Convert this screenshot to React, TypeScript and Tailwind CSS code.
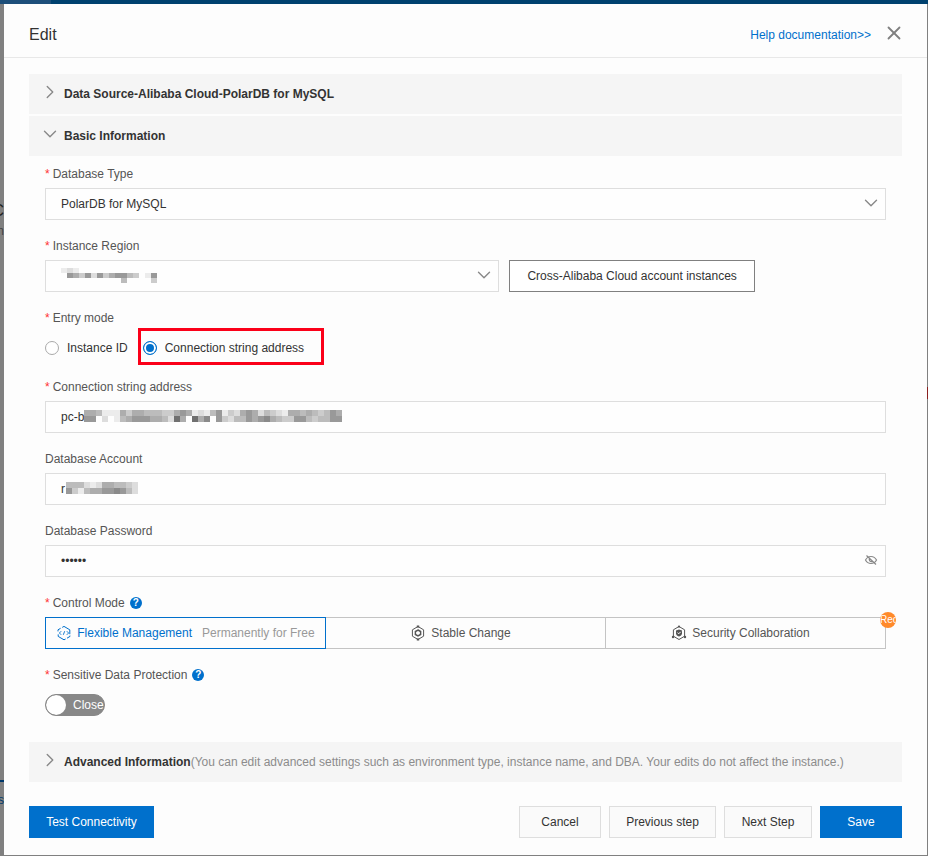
import { useState } from 'react';
import type { ReactNode } from 'react';
import { ChevronDown, ChevronRight, X } from 'lucide-react';

// each digit is one masked cell, 0 = empty, 8 = darkest
const regionMask = ['1210000000000000', '0653626356643016', '0000000000400003'];
const addressMask = [
  '5541115355444335651214613256524321554543465',
  '6602014566655428508570632446567543366434466',
];
const accountMask = ['444212554432', '631455667642'];

const shades = [
  'fill-transparent',
  'fill-[#ececec]',
  'fill-[#dddddd]',
  'fill-[#cccccc]',
  'fill-[#bcbcbc]',
  'fill-[#adadad]',
  'fill-[#999999]',
  'fill-[#8a8a8a]',
  'fill-[#707070]',
];

function Mask({ rows, className }: { rows: string[]; className: string }) {
  return (
    <svg
      aria-hidden="true"
      viewBox={`0 0 ${rows[0].length} ${rows.length}`}
      preserveAspectRatio="none"
      shapeRendering="crispEdges"
      className={`pointer-events-none absolute ${className}`}
    >
      {rows.map((row, y) =>
        row
          .split('')
          .map((shade, x) => (
            <rect key={`${x}-${y}`} x={x} y={y} width="1" height="1" className={shades[+shade]} />
          ))
      )}
    </svg>
  );
}

const hexagon = 'M8 1.5 13.6 4.8v6.4L8 14.5l-5.6-3.3V4.8z';

function FlexibleIcon() {
  return (
    <svg viewBox="0 0 16 16" fill="none" stroke="currentColor" className="size-4">
      <path d="M2 6.4V4.8l2.6-1.5M6.2 2.4 8 1.4l5.8 3.4v4.4M14 10.6v.8l-3 1.8M9.6 14 8 14.8l-5.8-3.4v-2" />
      <path d="M5.2 6.2 3.4 8l1.8 1.8M10.8 6.2 12.6 8l-1.8 1.8M8.7 6.2 7.3 9.8" strokeWidth="0.9" />
    </svg>
  );
}

function StableIcon() {
  return (
    <svg viewBox="0 0 16 16" fill="none" stroke="currentColor" className="size-4">
      <path d={hexagon} />
      <path d="m8 5 2.6 1.5v3L8 11 5.4 9.5v-3z" strokeWidth="1.5" />
      <path d="M6.8 1.5h2.4M6.8 14.5h2.4" strokeWidth="1.8" />
    </svg>
  );
}

function SecurityIcon() {
  return (
    <svg viewBox="0 0 16 16" fill="none" stroke="currentColor" className="size-4">
      <path d={hexagon} />
      <path
        d="m8 4.5 3 1v2.7c0 1.5-1 2.6-3 3.4-2-.8-3-1.9-3-3.4V5.5z"
        fill="currentColor"
        stroke="none"
      />
      <path d="m6.5 7.6 1.2 1.2 2-2" stroke="white" />
      <g fill="currentColor" stroke="none">
        <circle cx="8" cy="1.6" r="1.1" />
        <circle cx="2" cy="12" r="1.2" />
        <circle cx="14" cy="12" r="1.2" />
      </g>
    </svg>
  );
}

function EyeOffIcon() {
  return (
    <svg viewBox="0 0 14 14" fill="none" stroke="currentColor" strokeWidth="1.2" className="size-3.5">
      <path d="M1.5 7C2.8 4.6 4.6 3.5 7 3.5S11.2 4.6 12.5 7C11.2 9.4 9.4 10.5 7 10.5S2.8 9.4 1.5 7z" />
      <path d="M5.6 5.2a2.2 2.2 0 0 0 2.7 3.2M2.5 2.5l9.5 9" />
    </svg>
  );
}

const modes = [
  { name: 'Flexible Management', note: 'Permanently for Free', Icon: FlexibleIcon },
  { name: 'Stable Change', note: '', Icon: StableIcon },
  { name: 'Security Collaboration', note: '', Icon: SecurityIcon },
];

const fieldBox =
  'h-8 w-full appearance-none border border-[#dedede] bg-[#fefefe] px-[15px] outline-none';
const labelRow = 'flex h-7 items-center text-[#555555]';
const radio =
  'size-3.5 appearance-none rounded-full border border-[#aaaaaa] bg-white checked:border-[#0070cc] checked:bg-[#0070cc] checked:shadow-[inset_0_0_0_2px_white]';
const plainButton = 'h-8 border border-[#dedede] bg-[#fafafa]';
const primaryButton = 'h-8 bg-[#0070cc] text-white';

function Star() {
  return <span className="mr-[3px] text-[#ff3333]">*</span>;
}

function Help({ about }: { about: string }) {
  return (
    <button
      type="button"
      aria-label={`Help on ${about}`}
      className="ml-[5px] flex size-3 items-center justify-center rounded-full bg-[#0070cc] text-[10px] font-bold text-white"
    >
      ?
    </button>
  );
}

function Field({
  id,
  label,
  required,
  children,
}: {
  id: string;
  label: string;
  required?: boolean;
  children: ReactNode;
}) {
  return (
    <div>
      <label htmlFor={id} className={labelRow}>
        {required && <Star />}
        {label}
      </label>
      {children}
    </div>
  );
}

function SelectArrow() {
  return (
    <ChevronDown
      className="pointer-events-none absolute top-1 right-1 size-[22px] text-[#888888]"
      strokeWidth={1.5}
    />
  );
}

function Section({ title, note, open }: { title: string; note?: string; open?: boolean }) {
  const Chevron = open ? ChevronDown : ChevronRight;
  return (
    <h2 className="bg-[#f5f5f5] font-bold">
      <button
        type="button"
        aria-expanded={!!open}
        className="flex h-10 w-full items-center gap-[3px] px-2.5 text-left"
      >
        <Chevron className="mb-1 size-[22px] shrink-0 text-[#888888]" strokeWidth={1.5} />
        <span>
          {title}
          {note && <span className="font-normal text-[#8c8c8c]">{note}</span>}
        </span>
      </button>
    </h2>
  );
}

export default function App() {
  const [mode, setMode] = useState('Flexible Management');
  const [showPassword, setShowPassword] = useState(false);
  const [protection, setProtection] = useState(false);

  return (
    <div className="flex min-h-screen flex-col bg-[#808080] font-['Liberation_Sans',Arial,sans-serif] text-xs leading-5 text-[#333333]">
      <div className="h-1 bg-[#00416f]">
        <div className="h-1 w-[51px] bg-[#1d4f7a]" />
      </div>

      <div className="flex flex-1">
        {/* sliver of the dimmed page behind the dialog */}
        <div aria-hidden="true" className="flex w-1 flex-col items-end overflow-hidden pt-[197px]">
          <span className="text-base leading-5 text-[#222222]">C</span>
          <span className="text-[#444444]">n</span>
          <span className="mt-[539px] h-0.5 w-full bg-[#00386a]" />
          <span className="mt-2 text-[#00386a]">s</span>
        </div>

        <div role="dialog" aria-labelledby="dialog-title" className="mb-px flex-1 bg-[#fdfdfd]">
          <header className="flex h-[54px] items-center border-b border-[#e8e8e8] pt-2 pr-[22px] pl-[25px]">
            <h1 id="dialog-title" className="flex-1 text-base">
              Edit
            </h1>
            <a href="#help" className="mr-3 text-[#0070cc]">
              Help documentation&gt;&gt;
            </a>
            <button type="button" aria-label="Close dialog">
              <X className="mb-1 size-[22px] text-[#808080]" strokeWidth={2} />
            </button>
          </header>

          <main className="px-[25px] pt-4">
            <div className="space-y-0.5">
              <Section title="Data Source-Alibaba Cloud-PolarDB for MySQL" />
              <Section title="Basic Information" open />
            </div>

            <form className="flex flex-col gap-3 px-4 pt-1 pb-[26px]">
              <Field id="database-type" label="Database Type" required>
                <div className="relative">
                  <select id="database-type" className={fieldBox}>
                    <option>PolarDB for MySQL</option>
                  </select>
                  <SelectArrow />
                </div>
              </Field>

              <Field id="region" label="Instance Region" required>
                <div className="flex gap-2.5">
                  <div className="relative w-[54%]">
                    <select id="region" className={fieldBox} />
                    <Mask rows={regionMask} className="top-2 left-4 h-[15px] w-24" />
                    <SelectArrow />
                  </div>
                  <button type="button" className="h-8 w-[246px] border border-[#808080] bg-white">
                    Cross-Alibaba Cloud account instances
                  </button>
                </div>
              </Field>

              <fieldset>
                <legend className={labelRow}>
                  <Star />
                  Entry mode
                </legend>
                <div className="flex h-[29px] pt-0.5">
                  <label className="flex items-center gap-2">
                    <input type="radio" name="entry" className={radio} />
                    Instance ID
                  </label>
                  <label className="relative ml-2.5 flex items-center gap-2 pr-5 pl-[5px]">
                    <input type="radio" name="entry" defaultChecked className={radio} />
                    Connection string address
                    <span className="absolute inset-x-0 -top-1.5 -bottom-1 border-3 border-[#fb0019]" />
                  </label>
                </div>
              </fieldset>

              <Field id="address" label="Connection string address" required>
                <div className="relative">
                  <input id="address" type="text" defaultValue="pc-b" className={fieldBox} />
                  <Mask rows={addressMask} className="top-[9px] left-[39px] h-3 w-[258px]" />
                </div>
              </Field>

              <Field id="account" label="Database Account">
                <div className="relative">
                  <input id="account" type="text" defaultValue="r" className={fieldBox} />
                  <Mask rows={accountMask} className="top-[9px] left-[21px] h-3 w-[72px]" />
                </div>
              </Field>

              <Field id="password" label="Database Password">
                <div className="relative">
                  <input
                    id="password"
                    type={showPassword ? 'text' : 'password'}
                    defaultValue="secret"
                    className={fieldBox}
                  />
                  <button
                    type="button"
                    aria-label="Show password"
                    onClick={() => setShowPassword(!showPassword)}
                    className="absolute top-2 right-2 text-[#888888]"
                  >
                    <EyeOffIcon />
                  </button>
                </div>
              </Field>

              <div>
                <div className={labelRow}>
                  <Star />
                  <span id="mode-label">Control Mode</span>
                  <Help about="control mode" />
                </div>
                <div role="group" aria-labelledby="mode-label" className="relative flex pl-px">
                  {modes.map(({ name, note, Icon }) => (
                    <button
                      key={name}
                      type="button"
                      aria-pressed={mode === name}
                      onClick={() => setMode(name)}
                      className={`-ml-px flex h-8 flex-1 items-center justify-center gap-[5px] border ${
                        mode === name
                          ? 'z-10 border-[#0070cc] text-[#0070cc]'
                          : 'border-[#c4c4c4] text-[#555555]'
                      }`}
                    >
                      <Icon />
                      {name}
                      <span className="ml-[5px] text-[#999999]">{note}</span>
                    </button>
                  ))}
                  <span className="absolute -top-[5px] -right-2.5 z-10 size-4 overflow-hidden rounded-full bg-[#ff8a2b] text-[10px] leading-4 text-white">
                    Rec
                  </span>
                </div>
              </div>

              <div>
                <div className={labelRow}>
                  <Star />
                  <span id="protection-label">Sensitive Data Protection</span>
                  <Help about="sensitive data protection" />
                </div>
                <button
                  type="button"
                  role="switch"
                  aria-checked={protection}
                  aria-labelledby="protection-label"
                  onClick={() => setProtection(!protection)}
                  className={`mt-[5px] flex h-[22px] w-[60px] items-center gap-[7px] overflow-hidden rounded-full border text-white ${
                    protection
                      ? 'flex-row-reverse border-[#0070cc] bg-[#0070cc]'
                      : 'border-[#888888] bg-[#888888]'
                  }`}
                >
                  <span className="size-5 shrink-0 rounded-full bg-white" />
                  {protection ? 'Open' : 'Close'}
                </button>
              </div>
            </form>

            <Section
              title="Advanced Information"
              note="(You can edit advanced settings such as environment type, instance name, and DBA. Your edits do not affect the instance.)"
            />
          </main>

          <footer className="flex gap-2 px-[25px] pt-6 pb-4">
            <button type="button" className={`${primaryButton} mr-auto w-[125px]`}>
              Test Connectivity
            </button>
            <button type="button" className={`${plainButton} w-[82px]`}>
              Cancel
            </button>
            <button type="button" className={`${plainButton} w-[107px]`}>
              Previous step
            </button>
            <button type="button" className={`${plainButton} w-[88px]`}>
              Next Step
            </button>
            <button type="button" className={`${primaryButton} w-[82px]`}>
              Save
            </button>
          </footer>
        </div>

        <div aria-hidden="true" className="w-px pt-[383px]">
          <div className="h-3 bg-[#8a1f1f]" />
        </div>
      </div>
    </div>
  );
}
